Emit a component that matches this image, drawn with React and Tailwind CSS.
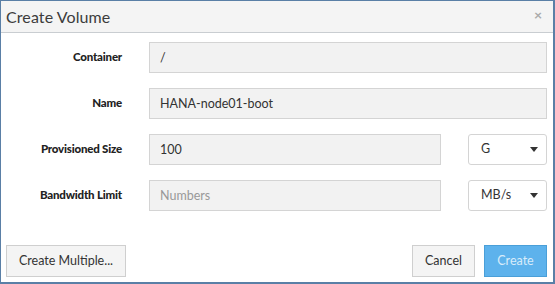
import { useState } from "react";

function Field({ label, children }) {
  return (
    <div className="flex items-center h-[31px]">
      <label className="w-[121px] shrink-0 text-right text-[11.5px] font-black tracking-[-0.2px] text-[#222] -mt-[2px]">
        {label}
      </label>
      <div className="flex-1 flex items-center ml-[27px]">{children}</div>
    </div>
  );
}

function UnitSelect({ value }) {
  return (
    <div className="ml-[27px] w-[79px] h-[31px] shrink-0 bg-white border border-[#d4d4d4] rounded-[3px] flex items-center justify-between pl-[12px] pr-[8px] text-[12.5px] text-[#333]">
      <span>{value}</span>
      <svg width="8" height="5" viewBox="0 0 8 5">
        <path d="M0 0h8L4 5z" fill="#333" />
      </svg>
    </div>
  );
}

export default function App() {
  const [name, setName] = useState("HANA-node01-boot");
  const [size, setSize] = useState("100");

  return (
    <div
      className="w-[555px] h-[284px] bg-white border-l border-t border-b-2 border-r-2 border-[#5a7fa6] flex flex-col text-[#333]"
      style={{ fontFamily: "Lato, 'Open Sans', sans-serif" }}
    >
      {/* Header */}
      <div className="h-[32px] shrink-0 bg-[#f4f4f4] border-b border-[#c9cdd1] flex items-center justify-between pl-[5px] pr-[11px]">
        <h1 className="text-[16px] text-[#3c3c3c] font-normal tracking-[0.1px]">Create Volume</h1>
        <span className="text-[14px] font-bold text-[#aaa] leading-none -mt-[4px]">×</span>
      </div>

      {/* Body */}
      <div className="flex-1 flex flex-col gap-[15px] pt-[9px] pr-[6px]">
        <Field label="Container">
          <input
            readOnly
            value="/"
            className="w-full h-[31px] bg-[#f2f2f2] border border-[#d4d4d4] px-[10px] text-[12.5px] text-[#333] outline-none"
          />
        </Field>
        <Field label="Name">
          <input
            value={name}
            onChange={(e) => setName(e.target.value)}
            className="w-full h-[31px] bg-[#f2f2f2] border border-[#d4d4d4] px-[10px] text-[12.5px] text-[#333] outline-none"
          />
        </Field>
        <Field label="Provisioned Size">
          <input
            value={size}
            onChange={(e) => setSize(e.target.value)}
            className="flex-1 min-w-0 h-[31px] bg-[#f2f2f2] border border-[#d4d4d4] px-[10px] text-[12.5px] text-[#333] outline-none"
          />
          <UnitSelect value="G" />
        </Field>
        <Field label="Bandwidth Limit">
          <input
            placeholder="Numbers"
            className="flex-1 min-w-0 h-[31px] bg-[#f2f2f2] border border-[#d4d4d4] px-[10px] text-[12.5px] text-[#333] placeholder:text-[#999] outline-none"
          />
          <UnitSelect value="MB/s" />
        </Field>
      </div>

      {/* Footer */}
      <div className="flex items-center justify-between pl-[5px] pr-[6px] pb-[5px]">
        <button className="h-[32px] w-[120px] bg-[#f4f4f4] border border-[#cfcfcf] text-[12.5px] text-[#333]">
          Create Multiple...
        </button>
        <div className="flex gap-[9px]">
          <button className="h-[32px] w-[63px] bg-[#f4f4f4] border border-[#cfcfcf] text-[12.5px] text-[#333]">
            Cancel
          </button>
          <button className="h-[32px] w-[63px] bg-[#5db2ec] border border-[#4a9fd8] text-[12.5px] text-[#d8ecfa]">
            Create
          </button>
        </div>
      </div>
    </div>
  );
}
